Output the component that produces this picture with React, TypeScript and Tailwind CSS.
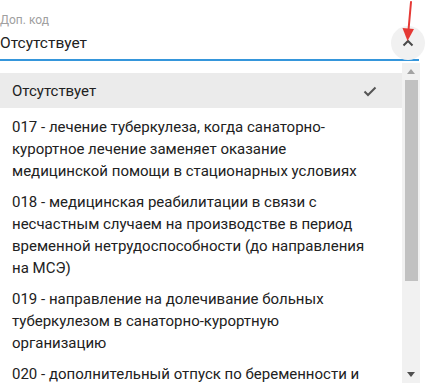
import React from "react";

const options = [
  "017 - лечение туберкулеза, когда санаторно-курортное лечение заменяет оказание медицинской помощи в стационарных условиях",
  "018 - медицинская реабилитации в связи с несчастным случаем на производстве в период временной нетрудоспособности (до направления на МСЭ)",
  "019 - направление на долечивание больных туберкулезом в санаторно-курортную организацию",
  "020 - дополнительный отпуск по беременности и родам при поступлении в санаторно-курортную организацию",
];

const App: React.FC = () => {
  return (
    <div className="relative w-[425px] h-[383px] overflow-hidden bg-white text-[#212121] font-['Roboto',sans-serif]">
      {/* поле */}
      <div className="pt-[12px] pr-[6px]">
        <div className="text-[12px] leading-[16px] text-[#a0a0a0]">Доп. код</div>
        <div className="flex items-center h-[33px] pb-[1px] border-b-2 border-[#3596db]">
          <div className="flex-1 text-[15.5px] leading-[22px] text-[#212121]">Отсутствует</div>
        </div>
      </div>

      {/* кнопка-шеврон */}
      <div className="absolute left-[391px] top-[26px] w-[34px] h-[34px] rounded-full bg-[#f1f1f1] flex items-center justify-center">
        <svg width="12" height="8" viewBox="0 0 12 8">
          <path d="M1.5 6.5 L6 2 L10.5 6.5" fill="none" stroke="#4a4a4a" strokeWidth="2" />
        </svg>
      </div>

      {/* красная стрелка */}
      <svg className="absolute left-[398px] top-0" width="20" height="44" viewBox="0 0 20 44">
        <line x1="13" y1="2" x2="10.5" y2="30" stroke="#e53935" strokeWidth="2" strokeLinecap="round" />
        <path d="M4.5 28 L16 29 L9.5 41 Z" fill="#e53935" />
      </svg>

      {/* выпадающий список */}
      <div className="absolute left-0 top-[63px] w-[420px] h-[330px] flex bg-white">
        <div className="flex-1 pt-[10px] flex flex-col">
          <div className="flex items-center justify-between bg-[#ebebeb] pl-3 pr-[25px] pt-[7px] pb-[6px] text-[15px] leading-[22px]">
            <span>Отсутствует</span>
            <svg width="14" height="11" viewBox="0 0 14 11">
              <path d="M1.5 5.5 L5 9 L12.5 1.5" fill="none" stroke="#555" strokeWidth="2" />
            </svg>
          </div>
          {options.map((o) => (
            <div key={o} className="pl-3 pr-[34px] pt-[8px] pb-[1px] text-[15px] leading-[22px]">
              {o}
            </div>
          ))}
        </div>

        {/* скроллбар */}
        <div className="w-[18px] h-[320px] bg-[#f1f1f1] flex flex-col items-center">
          <div className="h-[17px] flex items-center justify-center">
            <svg width="8" height="5" viewBox="0 0 8 5"><path d="M0 5 L4 0 L8 5 Z" fill="#a3a3a3" /></svg>
          </div>
          <div className="w-[13px] h-[201px] bg-[#c1c1c1]" />
          <div className="flex-1" />
          <div className="h-[17px] flex items-center justify-center">
            <svg width="8" height="5" viewBox="0 0 8 5"><path d="M0 0 L8 0 L4 5 Z" fill="#505050" /></svg>
          </div>
        </div>
      </div>
    </div>
  );
};

export default App;
